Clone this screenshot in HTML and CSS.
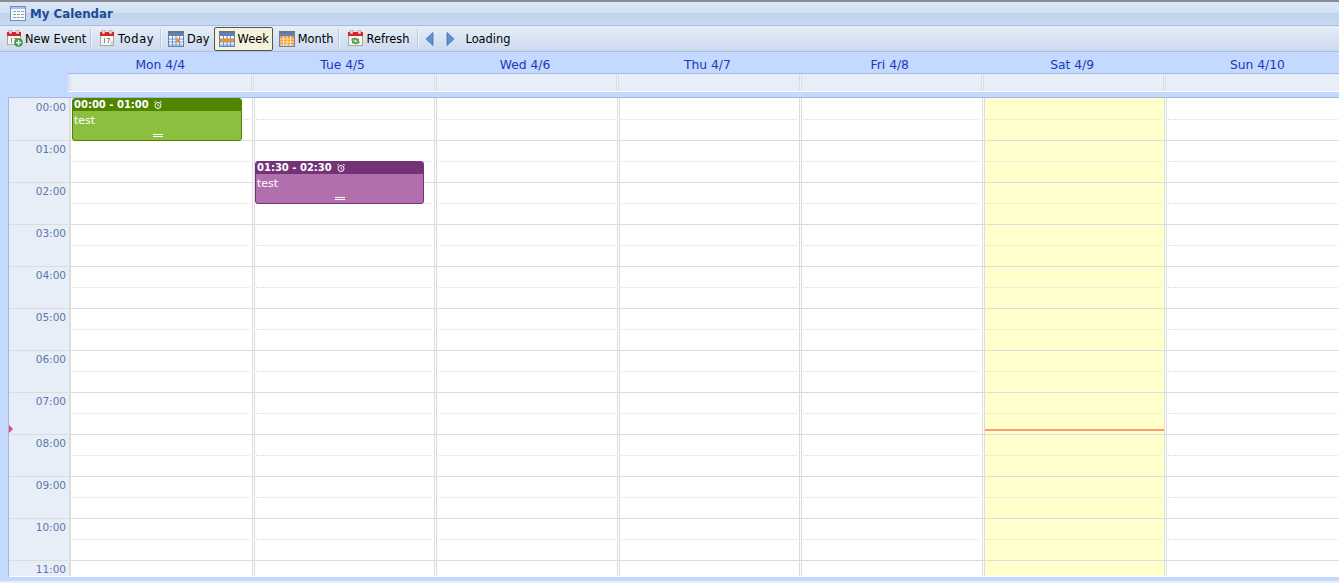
FILE: index.html
```html
<!DOCTYPE html>
<html lang="en">
<head>
    <meta charset="UTF-8">
    <title>My Calendar</title>
    <link rel="stylesheet" href="styles.css">
</head>
<body>
    <div class="titlebar">
        <svg class="title-icon" width="16" height="15" viewBox="0 0 16 15">
            <rect x="0.5" y="0.5" width="15" height="14" fill="#f4f7fc" stroke="#6d8fc4"/>
            <rect x="1" y="1" width="14" height="2" fill="#a9c1e6"/>
            <path d="M3 5h3v1H3zM7 5h3v1H7zM11 5h3v1h-3zM3 8h3v1H3zM7 8h3v1H7zM11 8h3v1h-3zM3 11h3v1H3zM7 11h3v1H7zM11 11h3v1h-3z" fill="#9a9fa8"/>
        </svg>
        <span class="title-text">My Calendar</span>
    </div>

    <div class="toolbar">
        <div class="tb-btn btn-new">
            <svg width="16" height="17" viewBox="0 0 16 17">
                <rect x="0.5" y="2.5" width="13" height="12" fill="#f6f6f2" stroke="#a8a8a0"/>
                <rect x="0" y="2" width="14" height="4" fill="#d8232a"/>
                <rect x="2" y="0" width="3" height="4" rx="1" fill="#e9e9e4" stroke="#b04040" stroke-width="0.5"/>
                <rect x="9" y="0" width="3" height="4" rx="1" fill="#e9e9e4" stroke="#b04040" stroke-width="0.5"/>
                <path d="M4 8h1v5H4zM7 8h3v1l-1.5 4h-1L9 9H7z" fill="#8a8a8a"/>
                <circle cx="11.5" cy="12.5" r="4" fill="#4ea24a" stroke="#2f7a30" stroke-width="0.6"/>
                <path d="M11 10h1.2v2h2v1.2h-2v2H11v-2H9V12h2z" fill="#fff"/>
            </svg>
            <span>New Event</span>
        </div>
        <div class="tb-sep sep-new"></div>
        <div class="tb-btn btn-today">
            <svg width="16" height="17" viewBox="0 0 16 17">
                <rect x="0.5" y="2.5" width="13" height="13" fill="#f6f6f2" stroke="#a8a8a0"/>
                <rect x="0" y="2" width="14" height="4" fill="#d8232a"/>
                <rect x="2" y="0" width="3" height="4" rx="1" fill="#e9e9e4" stroke="#b04040" stroke-width="0.5"/>
                <rect x="9" y="0" width="3" height="4" rx="1" fill="#e9e9e4" stroke="#b04040" stroke-width="0.5"/>
                <path d="M4 8h1v5H4zM7 8h3v1l-1.5 4h-1L9 9H7z" fill="#8a8a8a"/>
                <circle cx="12" cy="13" r="1.5" fill="#c9ccd0"/>
            </svg>
            <span>Today</span>
        </div>
        <div class="tb-sep sep-today"></div>
        <div class="tb-btn btn-day">
            <svg width="16" height="16" viewBox="0 0 16 16">
                <rect x="0" y="0" width="16" height="2" fill="#6f7480"/>
                <rect x="0.5" y="2.5" width="15" height="13" fill="#fbfbff" stroke="#5f82bd"/>
                <rect x="1" y="3" width="14" height="2" fill="#5f82bd"/>
                <path d="M1 8h14M1 11h14M1 14h14M4.5 5v10M8 5v10M11.500 5v10" stroke="#6d93cc" fill="none"/>
                <rect x="8" y="8" width="4" height="3" fill="#f0902a"/>
            </svg>
            <span>Day</span>
        </div>
        <div class="tb-btn tb-active btn-week">
            <svg width="16" height="16" viewBox="0 0 16 16">
                <rect x="0" y="0" width="16" height="2" fill="#6f7480"/>
                <rect x="0.5" y="2.5" width="15" height="13" fill="#fbfbff" stroke="#5f82bd"/>
                <rect x="1" y="3" width="14" height="2" fill="#5f82bd"/>
                <path d="M1 8h14M1 11h14M1 14h14M4.5 5v10M8 5v10M11.500 5v10" stroke="#6d93cc" fill="none"/>
                <rect x="1" y="8" width="14" height="3" fill="#f0902a"/>
            </svg>
            <span>Week</span>
        </div>
        <div class="tb-btn btn-month">
            <svg width="16" height="16" viewBox="0 0 16 16">
                <rect x="0" y="0" width="16" height="2" fill="#6f7480"/>
                <rect x="0.5" y="2.500" width="15" height="13" fill="#f39a35" stroke="#5f82bd"/>
                <rect x="1" y="3" width="14" height="2" fill="#5f82bd"/>
                <path d="M1 8h14M1 11h14M1 14h14M4.500 5v10M8 5v10M11.500 5v10" stroke="#fbe3c4" fill="none"/>
            </svg>
            <span>Month</span>
        </div>
        <div class="tb-sep sep-month"></div>
        <div class="tb-btn btn-refresh">
            <svg width="16" height="17" viewBox="0 0 16 17">
                <rect x="0.500" y="2.500" width="14" height="13" fill="#f6f6f2" stroke="#a8a8a0"/>
                <rect x="0" y="2" width="15" height="4" fill="#d8232a"/>
                <rect x="2" y="0" width="3" height="4" rx="1" fill="#e9e9e4" stroke="#b04040" stroke-width="0.5"/>
                <rect x="10" y="0" width="3" height="4" rx="1" fill="#e9e9e4" stroke="#b04040" stroke-width="0.5"/>
                <path d="M3 10c1-2.500 5-3 7-1l1-1v3.500H7.500l1.200-1.200C7.500 9.300 5 9.500 4.500 11zM12 12c-1 2.500-5 3-7 1l-1 1v-3.500h3.500l-1.200 1.200c1.200 1 3.700.8 4.200-.7z" fill="#58a04c"/>
            </svg>
            <span>Refresh</span>
        </div>
        <div class="tb-sep sep-refresh"></div>
        <svg class="nav-prev" width="9" height="14" viewBox="0 0 9 14">
            <path d="M8 0.500v13L1 7z" fill="#5d93dc" stroke="#3f6fb4" stroke-width="0.8"/>
        </svg>
        <svg class="nav-next" width="9" height="14" viewBox="0 0 9 14">
            <path d="M1 0.500v13L8 7z" fill="#5d93dc" stroke="#3f6fb4" stroke-width="0.8"/>
        </svg>
        <span class="loading">Loading</span>
    </div>

    <div class="week-head">
        <div class="day-names">
            <div></div>
            <div>Mon 4/4</div>
            <div>Tue 4/5</div>
            <div>Wed 4/6</div>
            <div>Thu 4/7</div>
            <div>Fri 4/8</div>
            <div>Sat 4/9</div>
            <div>Sun 4/10</div>
        </div>
        <div class="allday">
            <div class="allday-cell allday-first"></div>
            <div class="allday-cell"></div>
            <div class="allday-cell"></div>
            <div class="allday-cell"></div>
            <div class="allday-cell"></div>
            <div class="allday-cell"></div>
            <div class="allday-cell"></div>
        </div>
        <div class="head-strip"></div>
    </div>

    <div class="week-body">
        <div class="time-col">
            <div class="time-slot">00:00</div>
            <div class="time-slot">01:00</div>
            <div class="time-slot">02:00</div>
            <div class="time-slot">03:00</div>
            <div class="time-slot">04:00</div>
            <div class="time-slot">05:00</div>
            <div class="time-slot">06:00</div>
            <div class="time-slot">07:00</div>
            <div class="time-slot">08:00</div>
            <div class="time-slot">09:00</div>
            <div class="time-slot">10:00</div>
            <div class="time-slot">11:00</div>
            <div class="now-marker"></div>
        </div>

        <div class="day day-first">
            <div class="slot"></div><div class="slot"></div><div class="slot"></div><div class="slot"></div>
            <div class="slot"></div><div class="slot"></div><div class="slot"></div><div class="slot"></div>
            <div class="slot"></div><div class="slot"></div><div class="slot"></div><div class="slot"></div>
            <div class="event event-green">
                <div class="event-head">
                    <span>00:00 - 01:00</span>
                    <svg width="10" height="10" viewBox="0 0 10 10">
                        <circle cx="5" cy="5.500" r="3" fill="none" stroke="#fff"/>
                        <path d="M1 2.500l2-1.500M9 2.500L7 1M5 4v2h1.500" fill="none" stroke="#fff" stroke-width="0.8"/>
                    </svg>
                </div>
                <div class="event-text">test</div>
                <div class="event-grip"></div>
            </div>
        </div>
        <div class="day">
            <div class="slot"></div><div class="slot"></div><div class="slot"></div><div class="slot"></div>
            <div class="slot"></div><div class="slot"></div><div class="slot"></div><div class="slot"></div>
            <div class="slot"></div><div class="slot"></div><div class="slot"></div><div class="slot"></div>
            <div class="event event-purple">
                <div class="event-head">
                    <span>01:30 - 02:30</span>
                    <svg width="10" height="10" viewBox="0 0 10 10">
                        <circle cx="5" cy="5.500" r="3" fill="none" stroke="#fff"/>
                        <path d="M1 2.500l2-1.500M9 2.500L7 1M5 4v2h1.500" fill="none" stroke="#fff" stroke-width="0.8"/>
                    </svg>
                </div>
                <div class="event-text">test</div>
                <div class="event-grip"></div>
            </div>
        </div>
        <div class="day">
            <div class="slot"></div><div class="slot"></div><div class="slot"></div><div class="slot"></div>
            <div class="slot"></div><div class="slot"></div><div class="slot"></div><div class="slot"></div>
            <div class="slot"></div><div class="slot"></div><div class="slot"></div><div class="slot"></div>
        </div>
        <div class="day">
            <div class="slot"></div><div class="slot"></div><div class="slot"></div><div class="slot"></div>
            <div class="slot"></div><div class="slot"></div><div class="slot"></div><div class="slot"></div>
            <div class="slot"></div><div class="slot"></div><div class="slot"></div><div class="slot"></div>
        </div>
        <div class="day">
            <div class="slot"></div><div class="slot"></div><div class="slot"></div><div class="slot"></div>
            <div class="slot"></div><div class="slot"></div><div class="slot"></div><div class="slot"></div>
            <div class="slot"></div><div class="slot"></div><div class="slot"></div><div class="slot"></div>
        </div>
        <div class="day day-today">
            <div class="slot"></div><div class="slot"></div><div class="slot"></div><div class="slot"></div>
            <div class="slot"></div><div class="slot"></div><div class="slot"></div><div class="slot"></div>
            <div class="slot"></div><div class="slot"></div><div class="slot"></div><div class="slot"></div>
            <div class="now-line"></div>
        </div>
        <div class="day">
            <div class="slot"></div><div class="slot"></div><div class="slot"></div><div class="slot"></div>
            <div class="slot"></div><div class="slot"></div><div class="slot"></div><div class="slot"></div>
            <div class="slot"></div><div class="slot"></div><div class="slot"></div><div class="slot"></div>
        </div>
    </div>

    <div class="foot"></div>
</body>
</html>
```

FILE: styles.css
```css
html, body {
    margin: 0;
    padding: 0;
}
body {
    width: 1339px;
    height: 583px;
    overflow: hidden;
    background: #c3d9ff;
    font-family: "DejaVu Sans", Verdana, sans-serif;
    font-size: 11.4px;
    color: #000;
}

.titlebar {
    height: 23px;
    border-top: 2px solid #8a8d93;
    border-bottom: 1px solid #a3bde3;
    background: linear-gradient(to bottom, #d9e6f6 0%, #d3e1f4 45%, #c1d4ee 50%, #c8daf1 100%);
    display: flex;
    align-items: center;
    padding-left: 10px;
}
.title-icon {
    margin-right: 4px;
}
.title-text {
    font-weight: bold;
    font-size: 11.8px;
    color: #1c4a94;
}

.toolbar {
    height: 25px;
    background: linear-gradient(to bottom, #e6eef8, #cbdaee);
    border-bottom: 1px solid #a9c0e2;
    display: flex;
    align-items: center;
    padding-left: 3px;
}
.tb-btn {
    height: 24px;
    box-sizing: border-box;
    border: 1px solid transparent;
    display: flex;
    align-items: center;
    gap: 3px;
    padding: 0 3px;
}
.tb-active {
    border: 1px solid #555;
    background: #f4f4dc;
    border-radius: 2px;
}
.tb-sep {
    width: 1px;
    height: 20px;
    background: #eef3fa;
    border-left: 1px solid #b9c9df;
}
.sep-new {
    margin: 0 4px 0 0;
}
.sep-today {
    margin: 0 2px 0 2px;
}
.sep-month {
    margin: 0 4px 0 1px;
}
.sep-refresh {
    margin: 0 6px 0 3px;
}
.btn-new, .btn-today, .btn-refresh {
    gap: 2px;
}
.btn-today span {
    letter-spacing: 0.6px;
}
.btn-week {
    padding: 0 3px 0 4px;
}
.btn-month {
    margin-left: 2px;
}
.nav-next {
    margin-left: 12px;
}
.loading {
    margin-left: 11px;
}

.week-head {
    height: 45px;
}
.day-names {
    display: grid;
    grid-template-columns: 68px repeat(6, 182.4px) 188px;
    height: 21px;
    line-height: 26px;
    font-size: 12.3px;
    color: #2038b4;
    text-align: center;
}
.day-names div {
    padding-left: 2px;
}
.allday {
    display: grid;
    grid-template-columns: 183.4px repeat(5, 182.4px) 188px;
    margin-left: 68px;
    height: 17px;
    border-top: 1px solid #a3bde3;
    border-bottom: 1px solid #fff;
    background: #e8eef7;
}
.allday-cell {
    background: linear-gradient(to right, #dcdcdc 1px, #eef1f6 1px, #eef1f6 2px, #dcdcdc 2px, #dcdcdc 3px, transparent 3px);
}
.allday-first {
    background: linear-gradient(to right, #dfe4ec 3px, transparent 3px);
}
.head-strip {
    height: 5px;
}

.week-body {
    display: grid;
    grid-template-columns: 60px 183px repeat(5, 182.4px) 188px;
    height: 479px;
    margin-left: 8px;
    border-top: 1px solid #a2b9da;
    border-left: 1px solid #a2bbdd;
    background: #fff;
    overflow: hidden;
}
.time-col {
    position: relative;
    background: #e8eef7;
    padding-top: 1px;
    height: 477px;
    overflow: hidden;
}
.time-slot {
    height: 41px;
    line-height: 16px;
    border-bottom: 1px solid #dcdcdc;
    margin-right: 1px;
    padding-right: 2px;
    text-align: right;
    font-size: 10.5px;
    color: #5a78ac;
}
.now-marker {
    position: absolute;
    left: 0;
    top: 327px;
    width: 0;
    height: 0;
    border-left: 4px solid #e0457b;
    border-top: 4px solid transparent;
    border-bottom: 4px solid transparent;
}

.day {
    position: relative;
    height: 478px;
    padding-top: 1px;
    box-sizing: border-box;
    overflow: hidden;
    background: linear-gradient(to right, #dcdcdc 1px, #fff 1px, #fff 2px, #dcdcdc 2px, #dcdcdc 3px, #fff 3px);
}
.day-first {
    background: linear-gradient(to right, #dcdcdc 2px, #fff 2px);
}
.day-today {
    background: linear-gradient(to right, #dcdcdc 1px, #fff 1px, #fff 2px, #dcdcdc 2px, #dcdcdc 3px, #ffffcc 3px);
}
.slot {
    height: 41px;
    border-bottom: 1px solid #dcdcdc;
}
.slot::before {
    content: "";
    display: block;
    height: 20px;
    margin: 0 2px 0 4px;
    border-bottom: 1px dotted #dcdcdc;
}

.event {
    position: absolute;
    left: 3px;
    top: 0;
    width: 170px;
    height: 43px;
    box-sizing: border-box;
    border: 1px solid;
    border-radius: 3px;
    color: #fff;
    overflow: hidden;
}
.event-green {
    border-color: #508500;
    background: #8cbf40;
}
.event-purple {
    top: 63px;
    width: 169px;
    border-color: #743377;
    background: #b26fae;
}
.event-head {
    height: 12px;
    line-height: 12px;
    padding-left: 1px;
    font-size: 10px;
    font-weight: bold;
    white-space: nowrap;
    display: flex;
    align-items: center;
}
.event-head svg {
    margin-left: 4px;
}
.event-green .event-head {
    background: #508500;
}
.event-purple .event-head {
    background: #743377;
}
.event-text {
    font-size: 11px;
    line-height: 20px;
    padding-left: 1px;
}
.event-grip {
    width: 10px;
    height: 1px;
    margin: 3px auto 0;
    border-top: 1px solid #fff;
    border-bottom: 1px solid #fff;
}
.event-green .event-grip {
    margin-left: 80px;
}

.now-line {
    position: absolute;
    left: 3px;
    right: 0;
    top: 331px;
    height: 2px;
    background: #ff9b75;
}

.foot {
    height: 4px;
    background: #c3d9ff;
    border-bottom: 2px solid #e8eef7;
}
```
